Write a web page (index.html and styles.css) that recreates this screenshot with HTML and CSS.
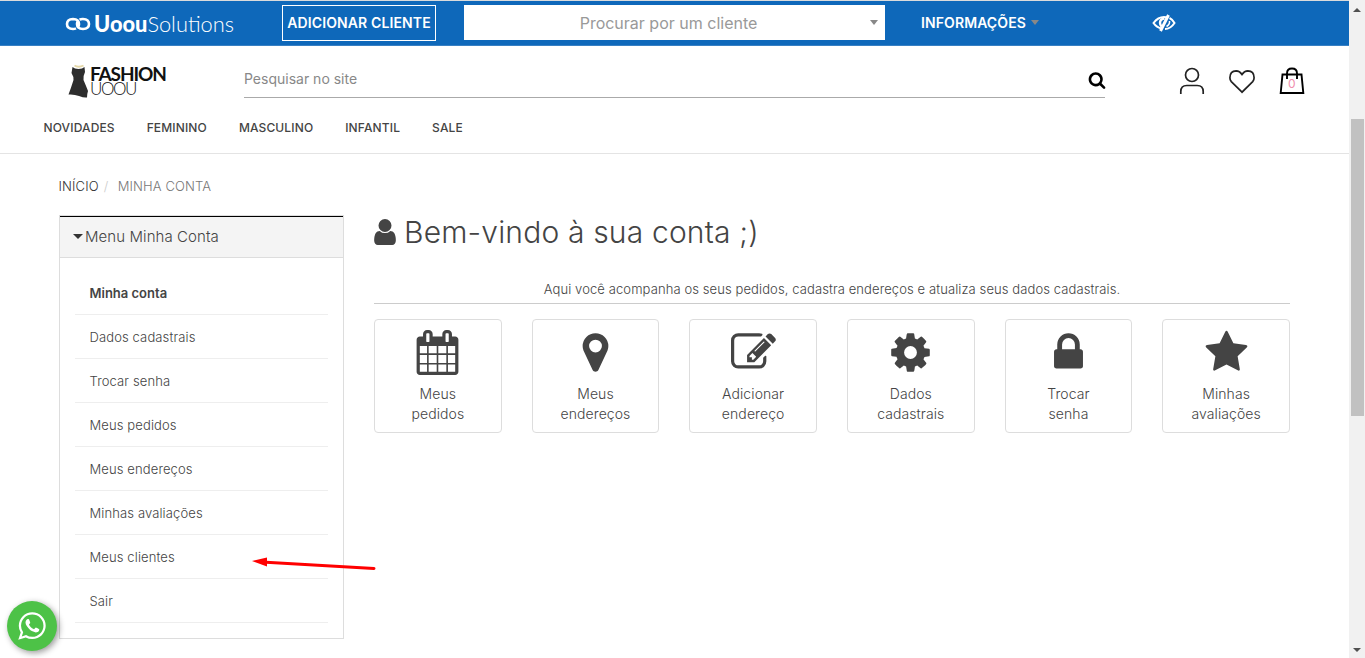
FILE: index.html
```html
<!DOCTYPE html>
<html lang="pt-BR">
  <head>
    <meta charset="UTF-8" />
    <meta name="viewport" content="width=device-width, initial-scale=1.0" />
    <title>Minha Conta</title>
    <link rel="stylesheet" href="styles.css" />
  </head>
  <body>
    <div class="page">
      <div class="topbar">
        <a class="brand" href="#">
          <svg class="brand-icon" viewBox="0 0 26 16"><g fill="none" stroke="#fff" stroke-width="2.6"><path d="M11 12.300A6 4.800 0 0 1 8 13Q2 12.800 2 8t6-5q6 .2 6 5 0 1.500-.8 2.800"/><path d="M14.500 3.700A6 4.800 0 0 1 18 3q6 .2 6 5t-6 5q-6-.2-6-5 0-1.500.8-2.800"/></g></svg>
          <span class="brand-name"><b>Uoou</b>Solutions</span>
        </a>
        <button class="add-client">ADICIONAR CLIENTE</button>
        <div class="client-select"><span>Procurar por um cliente</span><i class="caret"></i></div>
        <a class="info" href="#">INFORMAÇÕES <i class="caret"></i></a>
        <svg class="eye" viewBox="0 0 24 18"><g fill="none" stroke="#fff" stroke-width="2"><path d="M10 14.500Q4.500 13.500 1.500 9 6 3 12 3q2 0 3.500.6"/><path d="M17.500 4q3 1.500 5 5-4 6-9.500 6"/><path d="M16.500 1L8.500 17" stroke-width="3"/><path d="M12.500 4.500Q8 5 8 9q0 1.500 1.500 3.500" stroke-width="2.400"/><path d="M17.500 7q.5 3.500-3 5.500" stroke-width="1.500"/></g></svg>
      </div>

      <header class="header">
        <div class="header-row">
          <a class="logo" href="#">
            <svg class="dress" viewBox="0 0 21 34"><path d="M4.500 3q2 2 6 2t6-2l.5 5q-2 4-1.500 8 3 7 4.500 11-1 3-1 6.500-3 .5-8-1.500-5-2-10.500-1.500Q3 24 5.500 16q.500-3-2-7z" fill="#2d2d2d"/><path d="M6.500 1.500q4 2.500 9 0" fill="none" stroke="#e5d8a8" stroke-width="1.800"/></svg>
            <span class="logo-text"><b>FASHION</b><span>UOOU</span></span>
          </a>
          <div class="search">
            <span>Pesquisar no site</span>
            <svg viewBox="0 0 1792 1792"><path d="M1216 832q0-185-131.500-316.500t-316.500-131.500-316.500 131.500-131.500 316.500 131.500 316.500 316.500 131.500 316.500-131.500 131.500-316.500zm512 832q0 52-38 90t-90 38q-54 0-90-38l-343-342q-179 124-399 124-143 0-273.500-55.500t-225-150-150-225-55.500-273.500 55.500-273.500 150-225 225-150 273.500-55.500 273.500 55.500 225 150 150 225 55.500 273.500q0 220-124 399l343 343q37 37 37 90z"/></svg>
          </div>
          <div class="user-links">
            <svg viewBox="0 0 26 28"><g fill="none" stroke="#222" stroke-width="1.700"><circle cx="13" cy="8" r="6.500"/><path d="M1.800 27v-2.500q0-6 6-6h10.400q6 0 6 6V27"/></g></svg>
            <svg viewBox="0 0 26 28"><path d="M13 25.200L2.300 14.600Q.9 13 .9 10.700q0-6.700 6.300-6.900 3.400 0 5.800 3.700 2.400-3.700 5.800-3.700 6.300.2 6.300 6.900 0 2.300-1.400 3.900z" fill="none" stroke="#222" stroke-width="1.700"/></svg>
            <span class="bag">
              <svg viewBox="0 0 26 28"><g fill="none" stroke="#000" stroke-width="1.900"><path d="M3.500 7.500h19L24.300 26H1.700z"/><path d="M8 12V6.500q0-5 5-5t5 5V12"/></g></svg>
              <span class="bag-count">0</span>
            </span>
          </div>
        </div>
        <nav class="nav">
          <a href="#">NOVIDADES</a>
          <a href="#">FEMININO</a>
          <a href="#">MASCULINO</a>
          <a href="#">INFANTIL</a>
          <a href="#">SALE</a>
        </nav>
      </header>

      <div class="breadcrumb"><a href="#">INÍCIO</a><i>/</i><span>MINHA CONTA</span></div>

      <main class="content">
        <aside class="menu">
          <div class="menu-title"><i class="caret"></i>Menu Minha Conta</div>
          <ul>
            <li class="active">Minha conta</li>
            <li>Dados cadastrais</li>
            <li>Trocar senha</li>
            <li>Meus pedidos</li>
            <li>Meus endereços</li>
            <li>Minhas avaliações</li>
            <li>Meus clientes</li>
            <li>Sair</li>
          </ul>
        </aside>

        <section class="account">
          <h1>
            <svg viewBox="256 128 1280 1536"><path d="M1536 1399q0 109-62.500 187t-150.500 78h-854q-88 0-150.500-78t-62.500-187q0-85 8.500-160.500t31.500-152 58.500-131 94-89 134.500-34.500q131 128 313 128t313-128q76 0 134.500 34.500t94 89 58.500 131 31.500 152 8.500 160.500zm-256-887q0 159-112.500 271.500t-271.500 112.500-271.500-112.500-112.500-271.500 112.500-271.500 271.500-112.500 271.500 112.500 112.500 271.500z"/></svg>
            <span>Bem-vindo à sua conta ;)</span>
          </h1>
          <p class="intro">Aqui você acompanha os seus pedidos, cadastra endereços e atualiza seus dados cadastrais.</p>
          <div class="cards">
            <a class="card" href="#">
              <svg viewBox="0 0 1792 1792"><path d="M192 1664h288v-288h-288v288zm352 0h320v-288h-320v288zm-352-352h288v-320h-288v320zm352 0h320v-320h-320v320zm-352-384h288v-288h-288v288zm736 736h320v-288h-320v288zm-384-736h320v-288h-320v288zm768 736h288v-288h-288v288zm-384-352h320v-320h-320v320zm-352-864v-288q0-13-9.500-22.500t-22.500-9.500h-64q-13 0-22.500 9.500t-9.500 22.500v288q0 13 9.500 22.500t22.500 9.500h64q13 0 22.500-9.500t9.500-22.500zm736 864h288v-320h-288v320zm-384-384h320v-288h-320v288zm384 0h288v-288h-288v288zm32-480v-288q0-13-9.500-22.500t-22.500-9.500h-64q-13 0-22.500 9.500t-9.500 22.500v288q0 13 9.500 22.500t22.500 9.500h64q13 0 22.500-9.500t9.500-22.500zm384-64v1280q0 52-38 90t-90 38h-1408q-52 0-90-38t-38-90v-1280q0-52 38-90t90-38h128v-96q0-66 47-113t113-47h64q66 0 113 47t47 113v96h384v-96q0-66 47-113t113-47h64q66 0 113 47t47 113v96h128q52 0 90 38t38 90z"/></svg>
              <span>Meus<br />pedidos</span>
            </a>
            <a class="card" href="#">
              <svg viewBox="0 0 1792 1792"><path d="M1152 640q0-106-75-181t-181-75-181 75-75 181 75 181 181 75 181-75 75-181zm256 0q0 109-33 179l-364 774q-16 33-47.500 52t-67.500 19-67.500-19-46.500-52l-365-774q-33-70-33-179 0-212 150-362t362-150 362 150 150 362z"/></svg>
              <span>Meus<br />endereços</span>
            </a>
            <a class="card" href="#">
              <svg viewBox="0 0 1792 1792"><path d="M888 1184l116-116-152-152-116 116v56h96v96h56zm440-720q-16-16-33 1l-350 350q-17 17-1 33t33-1l350-350q17-17 1-33zm80 594v190q0 119-84.500 203.500t-203.500 84.500h-832q-119 0-203.500-84.500t-84.500-203.500v-832q0-119 84.500-203.500t203.500-84.500h832q63 0 117 25 15 7 18 23 3 17-9 29l-49 49q-14 14-32 8-23-6-45-6h-832q-66 0-113 47t-47 113v832q0 66 47 113t113 47h832q66 0 113-47t47-113v-126q0-13 9-22l64-64q15-15 35-7t20 29zm-96-738l288 288-672 672h-288v-288zm444 132l-92 92-288-288 92-92q28-28 68-28t68 28l152 152q28 28 28 68t-28 68z"/></svg>
              <span>Adicionar<br />endereço</span>
            </a>
            <a class="card" href="#">
              <svg viewBox="0 0 1792 1792"><path d="M1152 896q0-106-75-181t-181-75-181 75-75 181 75 181 181 75 181-75 75-181zm512-109v222q0 12-8 23t-20 13l-185 28q-19 54-39 91 35 50 107 138 10 12 10 25t-9 23q-27 37-99 108t-94 71q-12 0-26-9l-138-108q-44 23-91 38-16 136-29 186-7 28-36 28h-222q-14 0-24.500-8.500t-11.500-21.500l-28-184q-49-16-90-37l-141 107q-10 9-25 9-14 0-25-11-126-114-165-168-7-10-7-23 0-12 8-23 15-21 51-66.500t54-70.500q-27-50-41-99l-183-27q-13-2-21-12.500t-8-23.500v-222q0-12 8-23t19-13l186-28q14-46 39-92-40-57-107-138-10-12-10-24 0-10 9-23 26-36 98.500-107.500t94.500-71.500q13 0 26 10l138 107q44-23 91-38 16-136 29-186 7-28 36-28h222q14 0 24.500 8.500t11.500 21.500l28 184q49 16 90 37l142-107q9-9 24-9 13 0 25 10 129 119 165 170 7 8 7 22 0 12-8 23-15 21-51 66.500t-54 70.500q26 50 41 98l183 28q13 2 21 12.500t8 23.500z"/></svg>
              <span>Dados<br />cadastrais</span>
            </a>
            <a class="card" href="#">
              <svg viewBox="0 0 1792 1792"><path d="M640 768h512v-192q0-106-75-181t-181-75-181 75-75 181v192zm832 96v576q0 40-28 68t-68 28h-960q-40 0-68-28t-28-68v-576q0-40 28-68t68-28h32v-192q0-184 132-316t316-132 316 132 132 316v192h32q40 0 68 28t28 68z"/></svg>
              <span>Trocar<br />senha</span>
            </a>
            <a class="card" href="#">
              <svg viewBox="0 0 1792 1792"><path d="M1728 647q0 22-26 48l-363 354 86 500q1 7 1 20 0 21-10.500 35.500t-30.500 14.500q-19 0-40-12l-449-236-449 236q-22 12-40 12-21 0-31.500-14.500t-10.500-35.500q0-6 2-20l86-500-364-354q-25-27-25-48 0-37 56-46l502-73 225-455q19-41 49-41t49 41l225 455 502 73q56 9 56 46z"/></svg>
              <span>Minhas<br />avaliações</span>
            </a>
          </div>
        </section>
      </main>
    </div>

    <div class="scrollbar">
      <i class="arrow-up"></i>
      <div class="thumb"></div>
      <i class="arrow-down"></i>
    </div>

    <svg class="pointer" viewBox="0 0 126 16"><path d="M14 6.300L122 12.500" stroke="#f00" stroke-width="3" stroke-linecap="round"/><path d="M0 5L15 1.500V10.500z" fill="#f00"/></svg>

    <a class="whatsapp" href="#">
      <svg viewBox="0 0 1792 1792"><path d="M1113 974q13 0 97.500 44t89.500 53q2 5 2 15 0 33-17 76-16 39-71 65.500t-102 26.500q-57 0-190-62-98-45-170-118t-148-185q-72-107-71-194v-8q3-91 74-158 24-22 52-22 6 0 18 1.500t19 1.500q19 0 26.500 6.500t15.500 27.500q8 20 33 88t25 75q0 21-34.500 57.500t-34.500 46.500q0 7 5 15 34 73 102 137 56 53 151 101 12 7 22 7 15 0 54-48.500t52-48.500zm-203 530q127 0 243.500-50t200.500-134 134-200.500 50-243.500-50-243.500-134-200.500-200.500-134-243.500-50-243.500 50-200.500 134-134 200.500-50 243.500q0 203 120 368l-79 233 242-77q158 104 345 104zm0-1382q153 0 292.500 60t240.500 161 161 240.500 60 292.500-60 292.500-161 240.500-240.500 161-292.500 60q-195 0-365-94l-417 134 136-405q-108-178-108-389 0-153 60-292.500t161-240.500 240.500-161 292.500-60z"/></svg>
    </a>
  </body>
</html>
```
FILE: styles.css
```css
* {
  box-sizing: border-box;
}

body {
  margin: 0;
  height: 658px;
  display: flex;
  overflow: hidden;
  font-family: "Inter", sans-serif;
  font-size: 13px;
  color: #444;
  background: #fff;
}

a {
  color: inherit;
  text-decoration: none;
}

.page {
  flex: 1;
  border-top: 1px solid #dadbdc;
}

.caret {
  display: inline-block;
  border: 4px solid transparent;
  border-top: 5px solid #888;
  border-bottom: 0;
}

/* top bar */
.topbar {
  display: flex;
  align-items: center;
  height: 45px;
  padding: 0 0 1px 65px;
  background: #0e68ba;
  border-bottom: 1px solid #3880c3;
  color: #fff;
}

.brand {
  display: flex;
  align-items: center;
  width: 217px;
  padding-top: 3px;
}

.brand-icon {
  width: 26px;
  height: 16px;
  margin-right: 3px;
}

.brand-name {
  font-family: Lato, sans-serif;
  font-size: 21.8px;
  line-height: 24px;
  font-weight: 300;
}

.brand-name b {
  font-weight: 900;
}

.add-client {
  width: 154px;
  height: 36px;
  padding: 0;
  border: 1px solid #fff;
  background: none;
  color: #fff;
  font: 600 14px "Inter", sans-serif;
  letter-spacing: 0.12px;
}

.client-select {
  display: flex;
  align-items: center;
  width: 421px;
  height: 35px;
  margin-left: 28px;
  padding-right: 7px;
  background: #fff;
  color: #999;
  font-size: 16px;
}

.client-select span {
  flex: 1;
  padding-left: 3px;
  text-align: center;
}

.info {
  display: flex;
  align-items: center;
  gap: 5px;
  width: 232px;
  margin-left: 36px;
  font-size: 14px;
  font-weight: 600;
  letter-spacing: 0.1px;
}

.eye {
  width: 24px;
  height: 18px;
  margin-left: -1px;
}

/* header */
.header {
  height: 108px;
  border-bottom: 1px solid #e4e4e4;
}

.header-row {
  display: flex;
  height: 70px;
}

.logo {
  display: flex;
  width: 176px;
  margin: 18px 0 0 68px;
}

.dress {
  width: 21px;
  height: 34px;
}

.logo-text {
  display: flex;
  flex-direction: column;
  margin: 2px 0 0 1px;
  font-family: Lato, sans-serif;
  line-height: 15px;
  color: #111;
}

.logo-text b {
  font-weight: 700;
  font-size: 19px;
  letter-spacing: -1.1px;
}

.logo-text span {
  font-size: 17px;
  font-weight: 300;
  letter-spacing: -1.4px;
}

.search {
  display: flex;
  justify-content: space-between;
  align-items: center;
  width: 861px;
  height: 37px;
  margin-top: 15px;
  padding-bottom: 2px;
  border-bottom: 1px solid #aaa;
  color: #888;
  font-size: 14px;
}

.search svg {
  width: 18px;
  height: 18px;
  margin: 4px -1px 0 0;
}

.user-links {
  display: flex;
  gap: 24px;
  margin: 21px 0 0 74px;
}

.user-links svg {
  width: 26px;
  height: 28px;
}

.bag {
  position: relative;
}

.bag-count {
  position: absolute;
  left: 9px;
  top: 9px;
  font-size: 12px;
  color: #f08fae;
}

.nav {
  display: flex;
  gap: 32px;
  padding: 4px 0 0 43.5px;
  font-size: 12px;
  font-weight: 500;
  letter-spacing: 0.13px;
}

/* breadcrumb */
.breadcrumb {
  display: flex;
  margin: 23px 0 0 58.5px;
  line-height: 18px;
  font-weight: 350;
  letter-spacing: 0.12px;
  color: #777;
}

.breadcrumb a {
  color: #333;
}

.breadcrumb i {
  width: 19px;
  padding-left: 5px;
  color: #ccc;
  font-style: normal;
}

/* account */
.content {
  display: flex;
  gap: 30px;
  margin: 20px 59px 0 59px;
}

.menu {
  width: 285px;
  height: 424px;
  border: 1px solid #ddd;
}

.menu-title {
  display: flex;
  align-items: center;
  gap: 2px;
  height: 42px;
  padding: 0 0 2px 13px;
  border-top: 1px solid #000;
  border-bottom: 1px solid #ddd;
  background: #f4f4f4;
  font-size: 15px;
  font-weight: 300;
  letter-spacing: 0.08px;
}

.menu-title .caret {
  border-width: 5px 5px 0;
  border-top-color: #333;
}

.menu ul {
  margin: 13px 15px 0;
  padding: 0;
  list-style: none;
}

.menu li {
  height: 44px;
  padding-left: 14.5px;
  border-bottom: 1px solid #eee;
  line-height: 45px;
  font-weight: 350;
  letter-spacing: 0.12px;
}

.menu .active {
  font-weight: 600;
  letter-spacing: 0;
}

.account {
  flex: 1;
}

h1 {
  display: flex;
  align-items: center;
  gap: 8px;
  height: 34px;
  margin: 0;
  font-size: 30px;
  font-weight: 300;
  letter-spacing: 0.17px;
}

h1 svg {
  width: 22px;
  height: 26px;
  fill: #444;
}

.intro {
  height: 23px;
  margin: 32px 0 15px;
  border-bottom: 1px solid #ccc;
  text-align: center;
  line-height: 16px;
  font-weight: 350;
  letter-spacing: 0.1px;
}

.cards {
  display: grid;
  grid-template-columns: repeat(6, 1fr);
  gap: 30px;
}

.card {
  display: flex;
  flex-direction: column;
  align-items: center;
  height: 114px;
  padding-top: 10px;
  border: 1px solid #ddd;
  border-radius: 4px;
  text-align: center;
  font-size: 14px;
  font-weight: 350;
  letter-spacing: 0.08px;
  line-height: 20px;
}

.card svg {
  width: 45px;
  height: 45px;
  margin-bottom: 9px;
  fill: #444;
}

/* page scrollbar */
.scrollbar {
  display: flex;
  flex-direction: column;
  align-items: center;
  width: 16px;
  padding: 8px 0 6px;
  background: #f1f1f1;
}

.thumb {
  width: 13px;
  height: 297px;
  margin: 107px 0 auto 1px;
  background: #c1c1c1;
}

.arrow-up {
  border: 4px solid transparent;
  border-bottom-color: #505050;
  border-top: 0;
}

.arrow-down {
  border: 4px solid transparent;
  border-top-color: #505050;
  border-bottom: 0;
}

/* floating items */
.pointer {
  position: absolute;
  left: 252px;
  top: 556px;
  width: 126px;
  height: 16px;
}

.whatsapp {
  position: fixed;
  left: 7px;
  bottom: 7px;
  display: flex;
  align-items: center;
  justify-content: center;
  width: 50px;
  height: 50px;
  border-radius: 50%;
  background: #4dc247;
  box-shadow: 2px 2px 6px rgba(0, 0, 0, 0.4);
}

.whatsapp svg {
  width: 32px;
  height: 32px;
  fill: #fff;
}
```
